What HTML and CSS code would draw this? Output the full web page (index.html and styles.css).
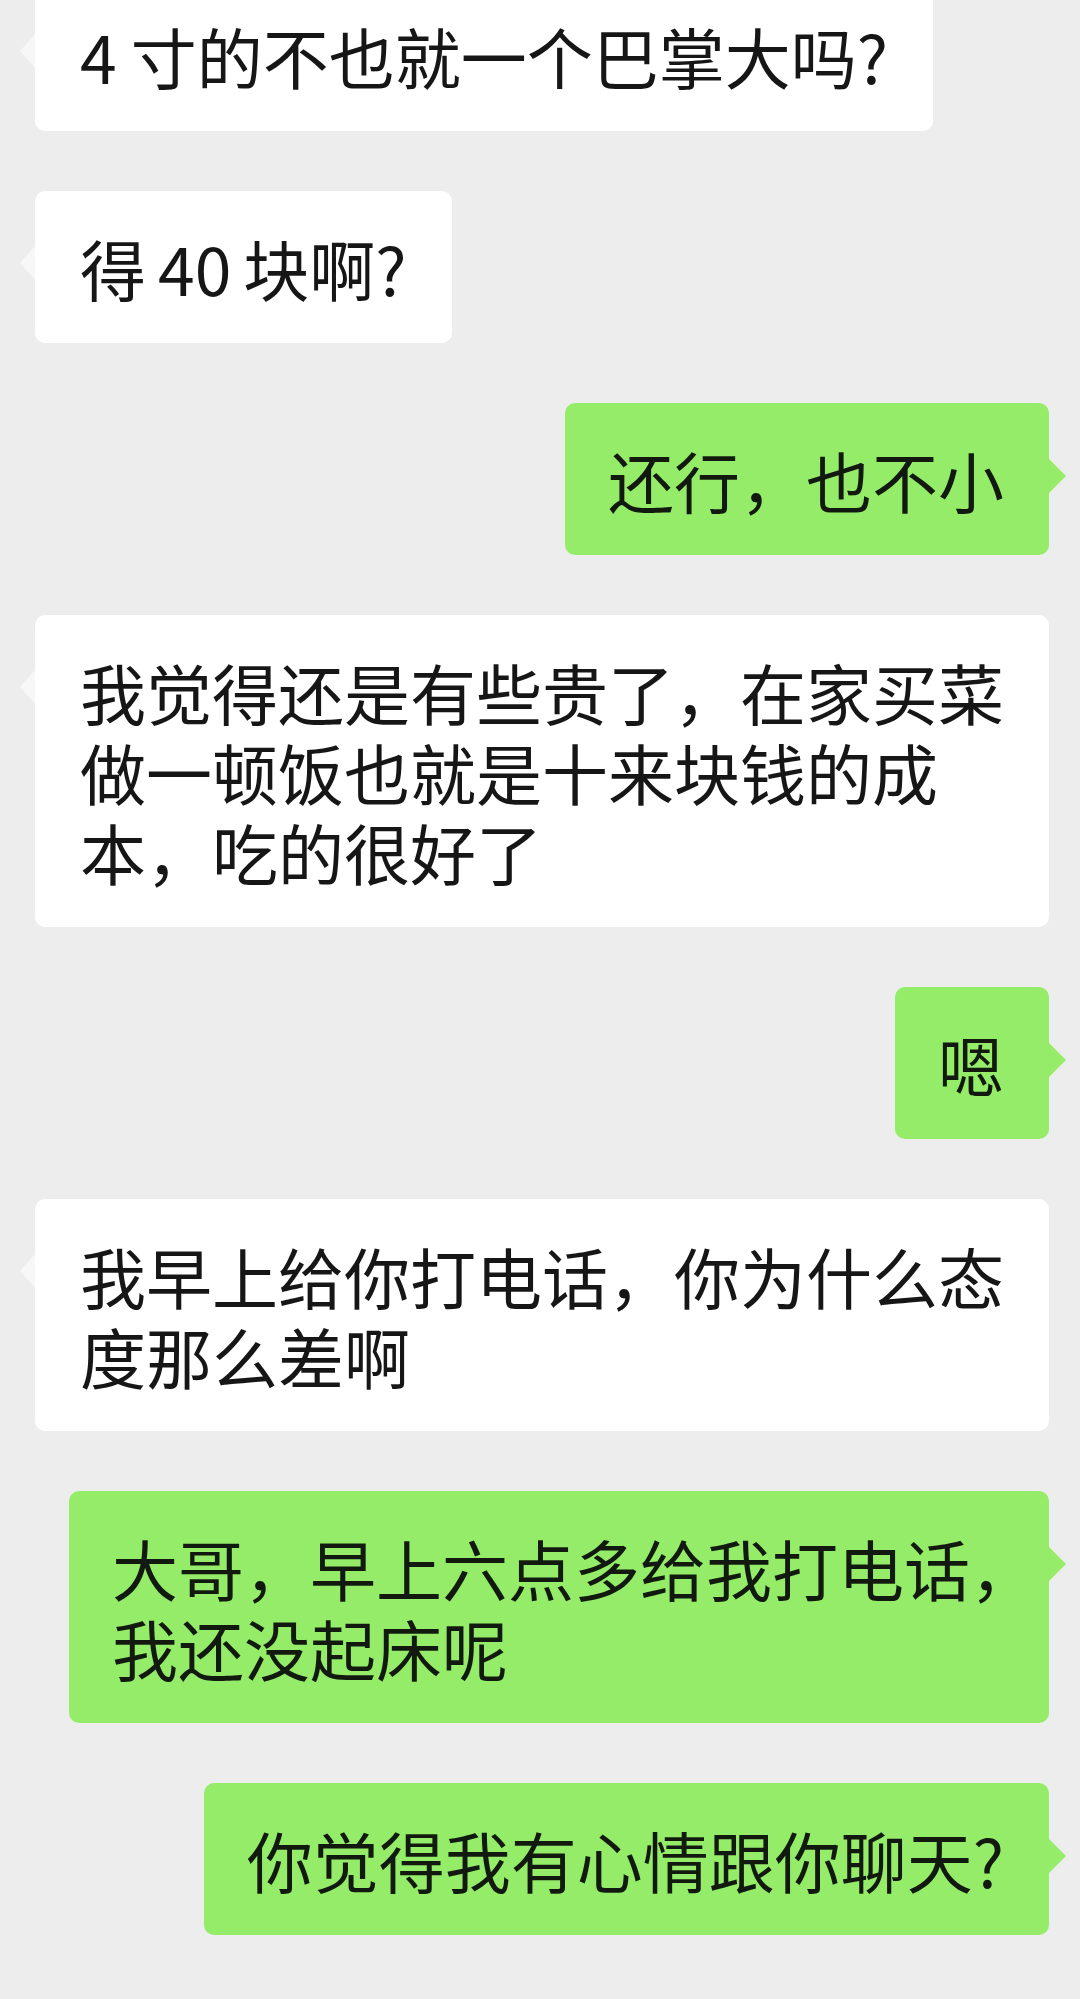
FILE: index.html
```html
<!DOCTYPE html>
<html lang="zh-CN">
<head>
<meta charset="utf-8">
<title>聊天记录</title>
<link rel="stylesheet" href="styles.css">
</head>
<body>
<main class="chat">
  <div class="row left"><p class="bubble in"><span class="latin lead">4</span>寸的不也就一个巴掌大吗?</p></div>
  <div class="row left"><p class="bubble in">得<span class="latin">40</span>块啊?</p></div>
  <div class="row right"><p class="bubble out">还行，也不小</p></div>
  <div class="row left"><p class="bubble in">我觉得还是有些贵了，在家买菜做一顿饭也就是十来块钱的成本，吃的很好了</p></div>
  <div class="row right"><p class="bubble out">嗯</p></div>
  <div class="row left"><p class="bubble in">我早上给你打电话，你为什么态度那么差啊</p></div>
  <div class="row right"><p class="bubble out">大哥，早上六点多给我打电话<span class="trim">，</span>我还没起床呢</p></div>
  <div class="row right"><p class="bubble out">你觉得我有心情跟你聊天?</p></div>
</main>
</body>
</html>
```
FILE: styles.css
```css
html, body {
  margin: 0;
  padding: 0;
  background: #ededed;
}

body {
  font-family: "Noto Sans CJK SC", "Noto Sans", sans-serif;
  color: #161616;
  text-autospace: no-autospace;
  overflow: hidden;
  height: 1999px;
}

.chat {
  display: flex;
  flex-direction: column;
  gap: 60px;
  margin-top: -21px;
}

.row {
  display: flex;
}

.row.left {
  justify-content: flex-start;
  padding-left: 35px;
}

.row.right {
  justify-content: flex-end;
  padding-right: 31px;
}

.bubble {
  position: relative;
  margin: 0;
  box-sizing: border-box;
  font-size: 66px;
  line-height: 80px;
  border-radius: 10px;
  word-break: normal;
  line-break: strict;
}

.bubble.in {
  background: #ffffff;
  max-width: 1014px;
  padding: 36px 45px 36px 45px;
}

.bubble.in::before {
  content: "";
  position: absolute;
  left: -15px;
  top: 54px;
  border-top: 18px solid transparent;
  border-bottom: 18px solid transparent;
  border-right: 16px solid rgba(255, 255, 255, 0.55);
}

.bubble.out {
  background: #95ec69;
  color: #121a10;
  max-width: 980px;
  padding: 36px 45px 36px 43px;
}

.bubble.out::after {
  content: "";
  position: absolute;
  right: -17px;
  top: 55px;
  border-top: 18px solid transparent;
  border-bottom: 18px solid transparent;
  border-left: 18px solid #95ec69;
}

.latin {
  margin: 0 12px;
}

.latin.lead {
  margin: 0 14px 0 0;
}

.trim {
  font-feature-settings: "halt" 1;
}
```
